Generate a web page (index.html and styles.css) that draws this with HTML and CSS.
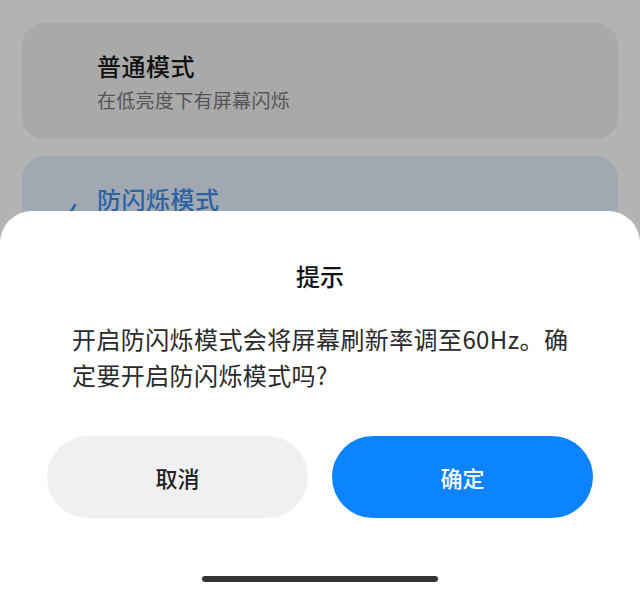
FILE: index.html
```html
<!DOCTYPE html>
<html lang="zh-CN">
<head>
    <meta charset="UTF-8">
    <meta name="viewport" content="width=device-width, initial-scale=1.0">
    <title>防闪烁模式</title>
    <link rel="stylesheet" href="styles.css">
</head>
<body>
    <div class="mode-list">
        <div class="mode-card">
            <div class="mode-title">普通模式</div>
            <div class="mode-desc">在低亮度下有屏幕闪烁</div>
        </div>
        <div class="mode-card selected">
            <svg class="check" width="24" height="24" viewBox="0 0 24 24">
                <path d="M13 2 L7 12 L12 18 L22 12" fill="none" stroke="currentColor" stroke-width="2.6" stroke-linecap="round" stroke-linejoin="round"/>
            </svg>
            <div class="mode-title">防闪烁模式</div>
            <div class="mode-desc">屏幕不闪烁</div>
        </div>
    </div>

    <div class="sheet">
        <h2 class="sheet-title">提示</h2>
        <p class="sheet-text">开启防闪烁模式会将屏幕刷新率调至60Hz。确定要开启防闪烁模式吗?</p>
        <div class="actions">
            <button class="btn btn-cancel">取消</button>
            <button class="btn btn-ok">确定</button>
        </div>
        <div class="home-bar"></div>
    </div>
</body>
</html>
```
FILE: styles.css
```css
body {
    margin: 0;
    height: 592px;
    overflow: hidden;
    background-color: #b3b3b3;
    font-family: "Noto Sans CJK SC", "Noto Sans", sans-serif;
}
.mode-list {
    display: flex;
    flex-direction: column;
    gap: 17px;
    padding: 23px 22px;
}
.mode-card {
    position: relative;
    background-color: #a9a9a9;
    border-radius: 22px;
    padding: 27px 75px 26px;
}
.mode-title {
    font-size: 24px;
    line-height: 32px;
    font-weight: 500;
    letter-spacing: 0.5px;
    color: #111;
}
.mode-desc {
    margin-top: 5px;
    font-size: 19px;
    line-height: 26px;
    letter-spacing: 0.3px;
    color: #555;
}
.mode-card.selected {
    background-color: #a1a8b1;
}
.mode-card.selected .mode-title {
    color: #2a63a6;
}
.check {
    position: absolute;
    left: 40px;
    top: 47px;
    color: #2a63a6;
}
.sheet {
    position: fixed;
    left: 0;
    right: 0;
    bottom: 0;
    height: 381px;
    box-sizing: border-box;
    background-color: #fff;
    border-radius: 32px 32px 0 0;
    padding: 49px 0 10px;
    display: flex;
    flex-direction: column;
}
.sheet-title {
    margin: 0;
    text-align: center;
    font-size: 24px;
    line-height: 32px;
    font-weight: 500;
    color: #111;
}
.sheet-text {
    margin: 29px 0 0;
    padding: 0 68px 0 72px;
    font-size: 24px;
    line-height: 36px;
    letter-spacing: 0.4px;
    color: #2a2a2a;
}
.actions {
    display: grid;
    grid-template-columns: 1fr 1fr;
    gap: 24px;
    padding: 0 47px;
    margin-top: 43px;
}
.btn {
    height: 82px;
    border: none;
    border-radius: 41px;
    font-family: inherit;
    font-size: 22px;
    font-weight: 500;
}
.btn-cancel {
    background-color: #f0f0f0;
    color: #222;
}
.btn-ok {
    background-color: #0d84ff;
    color: #fff;
}
.home-bar {
    margin: auto auto 0;
    width: 236px;
    height: 6px;
    border-radius: 3px;
    background-color: #333;
}
```
